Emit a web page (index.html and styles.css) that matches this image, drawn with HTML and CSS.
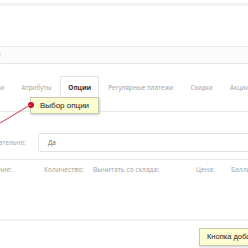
FILE: index.html
```html
<!DOCTYPE html>
<html lang="ru">
<head>
    <meta charset="UTF-8">
    <title>Опции товара</title>
    <link rel="stylesheet" href="styles.css">
</head>
<body>
    <div class="topbar"></div>

    <div class="page">
        <div class="panel-head">Опция</div>

        <div class="tabs">
            <div class="tab">Связи</div>
            <div class="tab">Атрибуты</div>
            <div class="tab active">Опции</div>
            <div class="tab">Регулярные платежи</div>
            <div class="tab">Скидки</div>
            <div class="tab">Акции</div>
        </div>

        <div class="form-row">
            <label class="form-label">Обязательно:</label>
            <div class="form-input">Да</div>
        </div>

        <div class="table-head">
            <div class="col col-name">Значение:</div>
            <div class="col">Количество:</div>
            <div class="col">Вычитать со склада:</div>
            <div class="col">Цена:</div>
            <div class="col">Баллы:</div>
        </div>
    </div>

    <!-- подсказки поверх страницы -->
    <div class="hint hint-tab"><span class="dot"></span>Выбор опции</div>
    <div class="pointer"></div>
    <div class="hint hint-add">Кнопка добавления</div>
</body>
</html>
```

FILE: styles.css
```css
html, body {
    margin: 0;
    padding: 0;
    background: #fff;
    overflow: hidden;
}

body {
    font-family: 'Open Sans', 'DejaVu Sans', sans-serif;
    font-size: 6.4px;
    color: #a0a0a0;
    position: relative;
    height: 248px;
}

.topbar {
    height: 3px;
    border-bottom: 3px solid #f3f3f3;
}

.page {
    margin-left: -40px;
    padding-top: 40px;
}

.panel-head {
    height: 16px;
    line-height: 16px;
    padding-left: 20px;
    background: #fbfbfb;
    border-top: 1px solid #e6e6e6;
    border-bottom: 1px solid #e6e6e6;
    color: #888;
}

.tabs {
    display: flex;
    gap: 1px;
    margin-top: 12px;
    padding-left: 18px;
    border-bottom: 1px solid #e8e8e8;
}

.tab {
    padding: 6px 7px 19px;
    border: 1px solid transparent;
    border-bottom: none;
    white-space: nowrap;
}

.tab.active {
    border-color: #e6e6e6;
    background: #fff;
    color: #333;
    font-weight: bold;
    margin-bottom: -1px;
    padding-bottom: 20px;
}

.form-row {
    display: flex;
    align-items: center;
    margin-top: 21px;
    padding-bottom: 7px;
    border-bottom: 1px solid #e8e8e8;
}

.form-label {
    width: 66px;
    flex-shrink: 0;
    text-align: right;
}

.form-input {
    flex: 1;
    height: 17px;
    line-height: 17px;
    margin-left: 12px;
    margin-right: -10px;
    padding-left: 9px;
    border: 1px solid #e3e3e3;
    border-radius: 2px;
    color: #666;
}

.table-head {
    display: grid;
    grid-template-columns: 84px 49px 103px 35px auto;
    padding-top: 5px;
    height: 54px;
    border-bottom: 2px solid #f1f1f1;
    font-size: 6.7px;
}

.col {
    white-space: nowrap;
}

.col-name {
    text-align: right;
    padding-right: 32px;
}

.hint {
    position: absolute;
    background: #fdfdd2;
    border: 1px solid #c9c9b0;
    box-shadow: 1px 1px 2px rgba(0, 0, 0, 0.2);
    font-family: 'Liberation Sans', Arial, sans-serif;
    font-size: 8px;
    color: #222;
    white-space: nowrap;
}

.hint-tab {
    left: 30px;
    top: 97px;
    width: 58px;
    height: 15px;
    line-height: 15px;
    padding-left: 9px;
}

.dot {
    position: absolute;
    left: -3px;
    top: 4px;
    width: 6px;
    height: 6px;
    border-radius: 50%;
    background: #c8102e;
}

.pointer {
    position: absolute;
    left: -5px;
    top: 104px;
    width: 36px;
    height: 1px;
    background: #d65a6a;
    transform-origin: right center;
    transform: rotate(-31deg);
}

.hint-add {
    left: 199px;
    top: 228px;
    height: 16px;
    line-height: 16px;
    padding-left: 7px;
    padding-right: 10px;
    font-size: 7.5px;
}
```
